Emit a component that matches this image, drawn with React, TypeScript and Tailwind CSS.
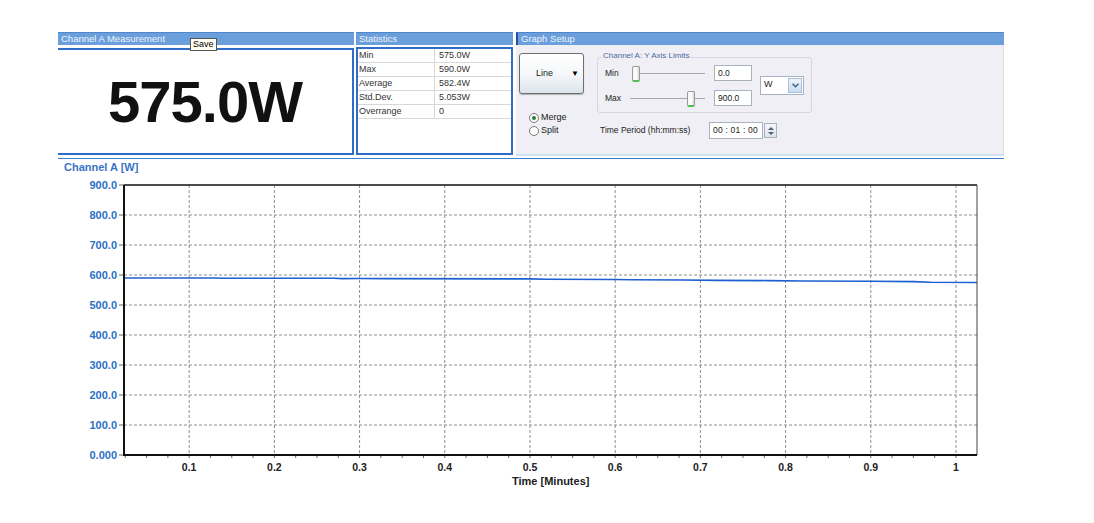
import React from 'react';

const PLOT = { left: 66, right: 919, top: 10, bottom: 280 };
const tx = (t: number) => PLOT.left + (t - 0.0235) * 852;
const vy = (v: number) => PLOT.bottom - v * 0.3;

const TREND: [number, number][] = [
  [0.0235, 590], [0.13, 590], [0.14, 589.5], [0.27, 589.5], [0.28, 588], [0.3, 588.5],
  [0.33, 588], [0.5, 587], [0.52, 586], [0.6, 585], [0.62, 584], [0.68, 583.5], [0.72, 582],
  [0.78, 581.5], [0.82, 580], [0.9, 579.5], [0.95, 578], [0.97, 576], [1.0247, 575],
];

const Y_LABELS = [900, 800, 700, 600, 500, 400, 300, 200, 100, 0];
const X_LABELS = [0.1, 0.2, 0.3, 0.4, 0.5, 0.6, 0.7, 0.8, 0.9, 1];

function Header({ title, stripe }: { title: string; stripe?: boolean }) {
  return (
    <div className={`h-[13px] bg-[#6a9fdb] border-t border-[#4f86cc] flex items-center text-[9.5px] leading-none text-[#eef4fc] ${stripe ? 'border-l-2 border-l-[#24539c] pl-[3px]' : 'pl-[3px]'}`}>
      {title}
    </div>
  );
}

function Thumb({ left }: { left: number }) {
  return (
    <div
      className="absolute top-[-7px] w-[8px] h-[16px] rounded-[2px] border border-[#9a9a9a] border-b-2 border-b-[#4fbf4f] bg-gradient-to-r from-[#f4f4f4] via-white to-[#d8d8d8]"
      style={{ left }}
    />
  );
}

function Chart() {
  const pts = TREND.map(([t, v]) => `${tx(t).toFixed(1)},${vy(v).toFixed(1)}`).join(' ');
  const minor: number[] = [];
  for (let t = 0.025; t < 1.025; t += 0.025) minor.push(t);
  return (
    <svg width="936" height="320" className="block ml-[58px] mt-[2px]">
      {Y_LABELS.filter((v) => v !== 0 && v !== 900).map((v) => (
        <line key={v} x1={PLOT.left} x2={PLOT.right} y1={vy(v)} y2={vy(v)} stroke="#8e8e8e" strokeDasharray="3 2" />
      ))}
      {X_LABELS.map((t) => (
        <line key={t} x1={tx(t)} x2={tx(t)} y1={PLOT.top} y2={PLOT.bottom} stroke="#8e8e8e" strokeDasharray="3 2" />
      ))}
      {minor.map((t) => (
        <line key={t} x1={tx(t)} x2={tx(t)} y1={PLOT.bottom} y2={PLOT.bottom + 3} stroke="#666" />
      ))}
      {Y_LABELS.map((v) => (
        <g key={v}>
          <line x1={PLOT.left - 5} x2={PLOT.left} y1={vy(v)} y2={vy(v)} stroke="#666" />
          <text x={PLOT.left - 7} y={vy(v) + 4} textAnchor="end" fontSize="11" fontWeight="bold" fill="#2c6fc7">
            {v === 0 ? '0.000' : `${v}.0`}
          </text>
        </g>
      ))}
      {X_LABELS.map((t) => (
        <text key={t} x={tx(t)} y={296} textAnchor="middle" fontSize="10.5" fontWeight="bold" fill="#222">
          {t}
        </text>
      ))}
      <text x={454} y={310} fontSize="11" fontWeight="bold" fill="#222">Time [Minutes]</text>
      <polyline points={pts} fill="none" stroke="#1d5fd0" strokeWidth="1.6" />
      <line x1={PLOT.left} x2={PLOT.right} y1={PLOT.top} y2={PLOT.top} stroke="#111" strokeWidth="1.5" />
      <line x1={PLOT.right} x2={PLOT.right} y1={PLOT.top} y2={PLOT.bottom} stroke="#444" strokeWidth="1" />
      <line x1={PLOT.left} x2={PLOT.left} y1={PLOT.top} y2={PLOT.bottom + 1} stroke="#111" strokeWidth="2" />
      <line x1={PLOT.left} x2={PLOT.right} y1={PLOT.bottom} y2={PLOT.bottom} stroke="#111" strokeWidth="2" />
    </svg>
  );
}

export default function App() {
  const stats = [
    ['Min', '575.0W'],
    ['Max', '590.0W'],
    ['Average', '582.4W'],
    ['Std.Dev.', '5.053W'],
    ['Overrange', '0'],
  ];

  return (
    <div className="w-[1094px] h-[523px] bg-white overflow-hidden font-['Liberation_Sans',Arial,sans-serif] text-[#222]">
      <div className="ml-[58px] mt-[32px] flex h-[125px] w-[946px]">
        {/* Channel A Measurement */}
        <div className="w-[296px] flex flex-col">
          <div className="relative">
            <Header title="Channel A Measurement" />
            <div className="absolute left-[132px] top-[6px] h-[13px] px-[2px] border border-[#555] bg-[#fffff4] text-[9px] leading-[11px] text-black">
              Save
            </div>
          </div>
          <div className="mt-[3px] h-[107px] border-t-2 border-r-2 border-b-2 border-[#2f6dc8] flex items-center justify-center">
            <span className="text-[58px] font-bold tracking-[-1px] leading-none text-[#111]">575.0W</span>
          </div>
        </div>

        {/* Statistics */}
        <div className="ml-[2px] w-[157px] flex flex-col">
          <Header title="Statistics" />
          <div className="mt-[2px] h-[108px] border-2 border-[#2f6dc8] bg-white">
            {stats.map(([k, v]) => (
              <div key={k} className="h-[14px] flex border-b border-[#d8d8d8] text-[9px] leading-[13px] text-[#333]">
                <div className="w-[77px] pl-[1px] border-r border-[#d8d8d8]">{k}</div>
                <div className="pl-[4px]">{v}</div>
              </div>
            ))}
          </div>
        </div>

        {/* Graph Setup */}
        <div className="ml-[3px] w-[488px] flex flex-col">
          <Header title="Graph Setup" stripe />
          <div className="h-[111px] bg-[#efeff5] border-r border-[#dcdce6] border-b-2 border-b-[#cfe2f6] flex text-[8.5px] text-[#222]">
            {/* left column */}
            <div className="w-[81px] pt-[8px] pl-[3px] flex flex-col">
              <div className="w-[65px] h-[41px] rounded-[3px] border border-[#6e6e6e] bg-gradient-to-b from-white via-[#f6f8fa] to-[#dde4ec] shadow-[0_1px_1px_rgba(0,0,0,0.25)] flex items-center pl-[16px] pr-[4px]">
                <span className="text-[9px]">Line</span>
                <span className="ml-auto text-[8px] leading-none text-black">▼</span>
              </div>
              <div className="mt-[17px] pl-[10px] flex flex-col">
                <div className="h-[13px] flex items-center gap-[2px]">
                  <span className="w-[10px] h-[10px] rounded-full border border-[#7a7a7a] bg-white flex items-center justify-center">
                    <span className="w-[4px] h-[4px] rounded-full bg-[#2e7d3a]" />
                  </span>
                  <span className="text-[9px]">Merge</span>
                </div>
                <div className="h-[13px] flex items-center gap-[2px]">
                  <span className="w-[10px] h-[10px] rounded-full border border-[#7a7a7a] bg-white" />
                  <span className="text-[9px]">Split</span>
                </div>
              </div>
            </div>

            {/* right column */}
            <div className="flex flex-col pt-[12px]">
              <div className="relative w-[215px] h-[56px] border border-[#d6d6e0] rounded-[3px] flex items-center">
                <span className="absolute left-[4px] top-[-7px] px-[1px] bg-[#efeff5] text-[8px] leading-[10px] text-[#4a6b9c]">
                  Channel A: Y Axis Limits
                </span>
                <div className="flex flex-col gap-[9px] pl-[7px] pt-[1px]">
                  <div className="flex items-center h-[16px]">
                    <span className="w-[27px]">Min</span>
                    <div className="relative w-[73px] h-[1px]">
                      <div className="absolute left-[8px] right-0 top-0 h-[1px] bg-[#a8a8a8]" />
                      <Thumb left={0} />
                    </div>
                    <div className="ml-[9px] w-[38px] h-[16px] border border-[#a9b3c0] bg-white pl-[3px] leading-[14px]">0.0</div>
                  </div>
                  <div className="flex items-center h-[16px]">
                    <span className="w-[25px]">Max</span>
                    <div className="relative w-[75px] h-[1px]">
                      <div className="absolute left-0 right-0 top-0 h-[1px] bg-[#a8a8a8]" />
                      <Thumb left={57} />
                    </div>
                    <div className="ml-[9px] w-[38px] h-[16px] border border-[#a9b3c0] bg-white pl-[3px] leading-[14px]">900.0</div>
                  </div>
                </div>
                <div className="ml-[8px] w-[44px] h-[19px] border border-[#a9b3c0] bg-white flex items-center">
                  <span className="pl-[3px] text-[9px]">W</span>
                  <span className="ml-auto mr-[1px] w-[14px] h-[15px] border border-[#a9c0da] bg-gradient-to-b from-[#eef4fb] to-[#c9dbef] flex items-center justify-center">
                    <svg width="7" height="5" viewBox="0 0 7 5">
                      <path d="M0.5 0.8 L3.5 3.8 L6.5 0.8" fill="none" stroke="#3d5f8c" strokeWidth="1.4" />
                    </svg>
                  </span>
                </div>
              </div>
              <div className="mt-[9px] flex items-center h-[17px]">
                <span className="w-[112px] pl-[3px]">Time Period (hh:mm:ss)</span>
                <div className="w-[54px] h-[17px] border border-[#a9b3c0] bg-white pl-[3px] leading-[15px] tracking-[0.2px]">00 : 01 : 00</div>
                <div className="ml-[1px] w-[13px] h-[15px] border border-[#a9b3c0] bg-gradient-to-b from-[#f5f7fa] to-[#dde3ea] flex flex-col items-center justify-center gap-[2px]">
                  <svg width="6" height="3" viewBox="0 0 6 3"><path d="M0 3 L3 0 L6 3Z" fill="#4a5e78" /></svg>
                  <svg width="6" height="3" viewBox="0 0 6 3"><path d="M0 0 L3 3 L6 0Z" fill="#4a5e78" /></svg>
                </div>
              </div>
            </div>
          </div>
        </div>
      </div>

      {/* chart section */}
      <div className="ml-[58px] mt-[1px] w-[946px] h-[1px] bg-[#3f7fcf]" />
      <div className="ml-[64px] mt-[2px] text-[11px] leading-[12px] font-bold text-[#3a74c4]">Channel A [W]</div>
      <Chart />
    </div>
  );
}
